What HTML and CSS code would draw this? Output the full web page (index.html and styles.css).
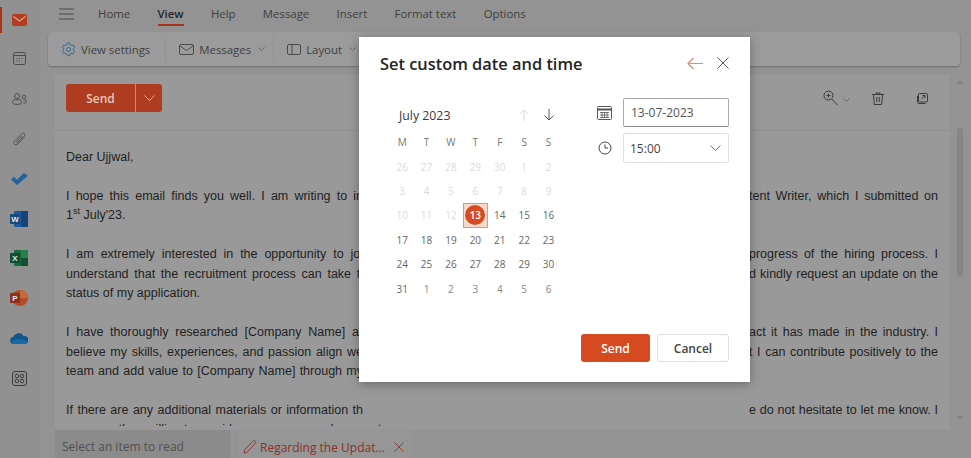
FILE: index.html
```html
<!DOCTYPE html>
<html lang="en">
<head>
    <meta charset="UTF-8">
    <meta name="viewport" content="width=device-width, initial-scale=1.0">
    <title>Set custom date and time</title>
    <link rel="stylesheet" href="styles.css">
</head>
<body>
    <div class="app">
        <div class="rail">
            <div class="rail-item active">
                <svg width="15" height="12" viewBox="0 0 15 12"><rect width="15" height="12" rx="2" fill="#b43c20"/><path d="M1.500 2.500L7.500 7l6-4.500" fill="none" stroke="#e0a594" stroke-width="1.100"/></svg>
            </div>
            <div class="rail-item">
                <svg width="13" height="13" viewBox="0 0 13 13" fill="none" stroke="#4a4a4a"><rect x=".5" y=".5" width="12" height="12" rx="2"/><path d="M.5 3.500h12"/><path d="M3.500 6.500h1M6 6.500h1M8.500 6.500h1M3.500 9h1M6 9h1" stroke-width="1.200"/></svg>
            </div>
            <div class="rail-item">
                <svg width="15" height="12" viewBox="0 0 15 12" fill="none" stroke="#4a4a4a" stroke-width=".9"><circle cx="5" cy="3" r="2.500"/><path d="M.5 9.500c0-2 .8-2.800 2.300-2.800h4.400c1.500 0 2.300.8 2.300 2.800 0 2.600-9 2.600-9 0z"/><circle cx="12" cy="4" r="1.800"/><path d="M11.500 7.200h1.500c1 0 1.500.6 1.500 1.800 0 .8-1.500 1.200-3 1"/></svg>
            </div>
            <div class="rail-item">
                <svg width="13" height="14" viewBox="0 0 13 14" fill="none" stroke="#555"><path d="M11.500 5L5 11.800c-1.300 1.300-2.800 1.400-3.600.6-.8-.8-.7-2.300.6-3.600L8.500 2c1-1 2.200-1.200 2.900-.6.700.6.600 1.900-.3 2.900L5.300 10.300c-.5.500-1 .6-1.400.2-.4-.4-.3-.9.200-1.400L9 4"/></svg>
            </div>
            <div class="rail-item">
                <svg width="17" height="12" viewBox="0 0 17 12"><path d="M0 6.500l2.800-2.800 3.200 3L12.800 0 17 2.800 6 12z" fill="#23629c"/></svg>
            </div>
            <div class="rail-item">
                <svg width="18" height="16" viewBox="0 0 18 16"><rect x="4" width="14" height="16" rx="1" fill="#1f5a9c"/><rect x="11" width="7" height="16" fill="#174478"/><rect y="3" width="10" height="10" rx="1" fill="#17487e"/><text x="5" y="11" class="app-letter">W</text></svg>
            </div>
            <div class="rail-item">
                <svg width="18" height="16" viewBox="0 0 18 16"><rect x="4" width="14" height="16" rx="1" fill="#1a6a40"/><rect x="11" width="7" height="8" fill="#2a8050"/><rect x="11" y="8" width="7" height="8" fill="#134f30"/><rect y="3" width="10" height="10" rx="1" fill="#124f2e"/><text x="5" y="11" class="app-letter">X</text></svg>
            </div>
            <div class="rail-item">
                <svg width="18" height="16" viewBox="0 0 18 16"><circle cx="10" cy="8" r="8" fill="#b34a28"/><path d="M10 0a8 8 0 0 1 8 8h-8z" fill="#c46a3c"/><rect y="3" width="10" height="10" rx="1" fill="#8e3018"/><text x="5" y="11" class="app-letter">P</text></svg>
            </div>
            <div class="rail-item">
                <svg width="18" height="12" viewBox="0 0 18 12"><path d="M4 12a3.500 3.500 0 0 1-.6-7A5.500 5.500 0 0 1 13.500 4 4 4 0 0 1 15 12z" fill="#12548c"/><path d="M4 12a3.500 3.500 0 0 1-3-2c2-3 8-4 16-1a3 3 0 0 1-2 3z" fill="#1a6aa8"/></svg>
            </div>
            <div class="rail-item">
                <svg width="15" height="15" viewBox="0 0 15 15" fill="none" stroke="#3c3c3c"><rect x=".5" y=".5" width="14" height="14" rx="2.500"/><circle cx="5" cy="5" r="1.800"/><circle cx="10" cy="5" r="1.800"/><circle cx="5" cy="10" r="1.800"/><circle cx="10" cy="10" r="1.800"/></svg>
            </div>
        </div>

        <div class="main">
            <div class="tabs">
                <svg class="burger" width="15" height="12" viewBox="0 0 15 12" stroke="#4a4a4a"><path d="M0 1h15M0 6h15M0 11h15"/></svg>
                <a>Home</a>
                <a class="current">View</a>
                <a>Help</a>
                <a>Message</a>
                <a>Insert</a>
                <a>Format text</a>
                <a>Options</a>
            </div>

            <div class="toolbar">
                <div class="tool">
                    <svg width="15" height="15" viewBox="0 0 15 15" fill="none" stroke="#2f6c9e"><path d="M6.200 1h2.600l.4 1.700 1.500.8 1.700-.5 1.200 2.200-1.200 1.300v1.600l1.200 1.300-1.200 2.200-1.700-.5-1.500.8-.4 1.700H6.200l-.4-1.700-1.500-.8-1.700.5-1.200-2.200 1.200-1.300V6.500L1.400 5.200l1.200-2.200 1.700.5 1.500-.8z"/><circle cx="7.500" cy="7.500" r="2"/></svg>
                    View settings
                </div>
                <div class="tool has-menu">
                    <svg width="15" height="11" viewBox="0 0 15 11" fill="none" stroke="#4a4a4a"><rect x=".5" y=".5" width="14" height="10" rx="1.500"/><path d="M1 2l6.500 4.500L14 2"/></svg>
                    Messages
                    <svg class="chev" width="7" height="4" viewBox="0 0 7 4"><path d="M.5.500l3 3 3-3"/></svg>
                </div>
                <div class="tool has-menu">
                    <svg width="14" height="11" viewBox="0 0 14 11" fill="none" stroke="#4a4a4a"><rect x=".5" y=".5" width="13" height="10" rx="1.500"/><path d="M5 .5v10"/></svg>
                    Layout
                    <svg class="chev" width="7" height="4" viewBox="0 0 7 4"><path d="M.5.500l3 3 3-3"/></svg>
                </div>
            </div>

            <div class="compose-wrap">
                <div class="compose">
                    <div class="compose-head">
                        <div class="send-split">
                            <span class="send-label">Send</span>
                            <span class="send-more">
                                <svg width="11" height="6" viewBox="0 0 11 6" fill="none" stroke="#e2b8aa"><path d="M.5.500l5 5 5-5"/></svg>
                            </span>
                        </div>
                        <div class="head-icons">
                            <span class="zoom-btn">
                                <svg width="15" height="16" viewBox="0 0 15 16" fill="none" stroke="#3c3c3c"><circle cx="5.500" cy="5.500" r="4.500"/><path d="M3.500 5.500h4M5.500 3.500v4M8.800 9l5.500 6"/></svg>
                                <svg class="chev" width="7" height="4" viewBox="0 0 7 4"><path d="M.5.500l3 3 3-3"/></svg>
                            </span>
                            <svg width="12" height="13" viewBox="0 0 12 13" fill="none" stroke="#3c3c3c"><path d="M0 2.500h12M4 2.500V1h4v1.500M1.500 2.500l.8 10h7.400l.8-10M4.800 5v5M7.200 5v5"/></svg>
                            <svg class="popout" width="11" height="11" viewBox="0 0 11 11" fill="none" stroke="#3c3c3c"><rect x="1.500" y=".5" width="9" height="8.500" rx="1"/><path d="M.5 3v6.500a1 1 0 0 0 1 1h7M4.500 6L8 2.500M5.500 2.500H8V5"/></svg>
                        </div>
                    </div>
                    <div class="letter">
                        <p><span class="line plain">Dear Ujjwal,</span></p>
                        <p>
                            <span class="line"><span>I hope this email finds you well. I am writing to in</span><span>tent Writer, which I submitted on</span></span>
                            <span class="line plain">1<sup>st</sup> July'23.</span>
                        </p>
                        <p>
                            <span class="line"><span>I am extremely interested in the opportunity to joi</span><span>progress of the hiring process. I</span></span>
                            <span class="line"><span>understand that the recruitment process can take ti</span><span>d kindly request an update on the</span></span>
                            <span class="line plain">status of my application.</span>
                        </p>
                        <p>
                            <span class="line"><span>I have thoroughly researched [Company Name] ar</span><span>act it has made in the industry. I</span></span>
                            <span class="line"><span>believe my skills, experiences, and passion align we</span><span>t I can contribute positively to the</span></span>
                            <span class="line"><span>team and add value to [Company Name] through my</span><span></span></span>
                        </p>
                        <p>
                            <span class="line"><span>If there are any additional materials or information th</span><span>e do not hesitate to let me know. I</span></span>
                            <span class="line plain">am more than willing to provide any necessary documents</span>
                        </p>
                    </div>
                </div>
                <div class="scrollbar">
                    <span class="arrow-up"></span>
                    <span class="thumb"></span>
                    <span class="arrow-down"></span>
                </div>
            </div>

            <div class="bottom-tabs">
                <div class="read-tab">Select an item to read</div>
                <div class="draft-tab">
                    <svg width="14" height="14" viewBox="0 0 14 14" fill="none" stroke="#8f3a34"><path d="M1 13l.8-3.500L10 1.200c.7-.7 1.700-.7 2.300 0 .6.600.6 1.600 0 2.200L4.300 12z"/></svg>
                    <span>Regarding the Updat...</span>
                    <svg width="10" height="10" viewBox="0 0 10 10" stroke="#8f3a34"><path d="M.5.500l9 9M9.500.500l-9 9"/></svg>
                </div>
            </div>
        </div>
    </div>

    <div class="dialog">
        <div class="dialog-head">
            <h2>Set custom date and time</h2>
            <svg width="16" height="13" viewBox="0 0 16 13" fill="none" stroke="#e08a72" stroke-width="1.200"><path d="M16 6.500H1M6.500 1L1 6.500 6.500 12"/></svg>
            <svg class="close" width="12" height="12" viewBox="0 0 12 12" stroke="#555"><path d="M.5.500l11 11M11.500.500l-11 11"/></svg>
        </div>
        <div class="dialog-body">
            <div class="calendar">
                <div class="cal-head">
                    <span class="month">July 2023</span>
                    <svg width="10" height="12" viewBox="0 0 10 12" fill="none" stroke="#dcdcdc"><path d="M5 12V1M.5 5.500L5 1l4.500 4.500"/></svg>
                    <svg width="10" height="12" viewBox="0 0 10 12" fill="none" stroke="#555"><path d="M5 0v11M.5 6.500L5 11l4.500-4.500"/></svg>
                </div>
                <div class="cal-grid" id="cal-grid"></div>
            </div>
            <div class="when">
                <div class="when-row">
                    <svg width="15" height="14" viewBox="0 0 15 14" fill="none" stroke="#555"><rect x=".5" y=".5" width="14" height="13" rx="1"/><path d="M.5 3.500h14" stroke-width="2"/><path d="M3 6.500h9M3 9h9M3 11.500h9M5 6v6M7.500 6v6M10 6v6" stroke-width=".8"/></svg>
                    <div class="date-field">13-07-2023</div>
                </div>
                <div class="when-row">
                    <svg width="14" height="14" viewBox="0 0 14 14" fill="none" stroke="#444"><circle cx="7" cy="7" r="6"/><path d="M7 3.500V7h3"/></svg>
                    <div class="time-field">
                        15:00
                        <svg width="11" height="6" viewBox="0 0 11 6" fill="none" stroke="#777"><path d="M.5.500l5 5 5-5"/></svg>
                    </div>
                </div>
            </div>
        </div>
        <div class="dialog-foot">
            <button class="btn-send">Send</button>
            <button class="btn-cancel">Cancel</button>
        </div>
    </div>

    <script>
        const days = ["M", "T", "W", "T", "F", "S", "S"];
        const dates = [26, 27, 28, 29, 30, 1, 2, 3, 4, 5, 6, 7, 8, 9, 10, 11, 12, 13, 14, 15, 16, 17, 18, 19, 20, 21, 22, 23, 24, 25, 26, 27, 28, 29, 30, 31, 1, 2, 3, 4, 5, 6];
        const grid = document.getElementById("cal-grid");

        days.forEach(d => {
            const cell = document.createElement("span");
            cell.className = "cal-cell dow";
            cell.textContent = d;
            grid.appendChild(cell);
        });

        dates.forEach((d, i) => {
            const cell = document.createElement("span");
            cell.className = "cal-cell";
            if (i < 17) cell.classList.add("past");
            if (i > 35) cell.classList.add("next");
            if (i === 17) {
                cell.classList.add("today");
                cell.innerHTML = `<b>${d}</b>`;
            } else {
                cell.textContent = d;
            }
            grid.appendChild(cell);
        });
    </script>
</body>
</html>
```

FILE: styles.css
```css
body {
    margin: 0;
    background-color: #939393;
    font-family: "Open Sans", sans-serif;
    color: #3a3a3a;
    overflow: hidden;
}
.app {
    display: flex;
    height: 458px;
}
.rail {
    width: 41px;
    flex-shrink: 0;
    box-sizing: border-box;
    padding-right: 3px;
    background-color: #919191;
}
.rail-item {
    height: 39.9px;
    display: flex;
    align-items: center;
    justify-content: center;
    position: relative;
}
.rail-item:first-child {
    height: 39px;
}
.rail-item.active::before {
    content: "";
    position: absolute;
    left: 0;
    top: 7px;
    width: 2px;
    height: 26px;
    background-color: #a8341c;
}
.app-letter {
    font-family: "Liberation Sans", sans-serif;
    font-size: 8px;
    font-weight: bold;
    fill: #e6e6e6;
    text-anchor: middle;
}
.main {
    flex: 1;
    min-width: 0;
    display: flex;
    flex-direction: column;
}
.tabs {
    height: 32px;
    display: flex;
    align-items: flex-start;
    gap: 27.3px;
    padding-left: 18px;
    font-size: 11.4px;
}
.tabs a {
    padding-top: 5px;
    height: 19px;
    line-height: 18px;
    color: #3f3f3f;
}
.tabs a.current {
    color: #262626;
    font-weight: 600;
    border-bottom: 2px solid #a8341c;
}
.burger {
    margin: 8px -3.3px 0 0;
}
.toolbar {
    height: 34px;
    margin: 0 11px 0 7px;
    border-radius: 4px;
    background-color: #9b9b9b;
    box-shadow: 0 1px 2px rgba(0, 0, 0, 0.25);
    display: flex;
    align-items: center;
    font-size: 11.4px;
    color: #3f3f3f;
}
.tool {
    display: flex;
    align-items: center;
    gap: 5px;
    padding: 0 15px 0 13px;
    height: 26px;
    border-right: 1px solid #939393;
}
.tool.has-menu {
    padding-right: 8px;
}
.tool:last-child {
    border-right: none;
}
.tool .chev {
    margin-left: 2px;
}
.chev {
    fill: none;
    stroke: #666;
    margin-left: 5px;
}
.compose-wrap {
    flex: 1;
    min-height: 0;
    display: flex;
    margin: 9px 0 0 14px;
}
.compose {
    flex: 1;
    min-width: 0;
    background-color: #999;
    display: flex;
    flex-direction: column;
    padding-bottom: 4px;
}
.compose-head {
    height: 56px;
    flex-shrink: 0;
    display: flex;
    align-items: flex-start;
    justify-content: space-between;
    padding: 9px 22px 0 11px;
    box-sizing: border-box;
    border-bottom: 1px solid #909090;
}
.send-split {
    display: flex;
    height: 28px;
    width: 96px;
    border-radius: 3px;
    overflow: hidden;
    background-color: #ad3c20;
    color: #e6c8bc;
    font-size: 12px;
    font-weight: 600;
}
.send-label {
    flex: 1;
    text-align: center;
    line-height: 29px;
    border-right: 1px solid #c98a78;
}
.send-more {
    width: 26px;
    display: flex;
    align-items: center;
    justify-content: center;
}
.head-icons {
    display: flex;
    align-items: center;
    gap: 22px;
    height: 28px;
}
.zoom-btn {
    display: flex;
    align-items: center;
}
.zoom-btn .chev {
    margin-top: 3px;
}
.popout {
    margin-left: 11px;
}
.letter {
    flex: 1;
    min-height: 0;
    overflow: hidden;
    padding: 17px 12px 0 11px;
    font-family: "Liberation Sans", sans-serif;
    font-size: 12.5px;
    line-height: 19.46px;
    color: #1f1f1f;
}
.letter p {
    margin: 0 0 19.46px;
}
.line {
    display: grid;
    grid-template-columns: 297px 1fr 189px;
    height: 19.46px;
}
.line span:first-child {
    grid-column: 1;
    text-align-last: justify;
}
.line span:last-child {
    grid-column: 3;
    text-align-last: justify;
}
.line.plain {
    display: block;
}
.letter sup {
    font-size: 9px;
    line-height: 0;
}
.scrollbar {
    width: 21px;
    position: relative;
    background-color: #939393;
}
.thumb {
    position: absolute;
    left: 7px;
    top: 53px;
    width: 6px;
    height: 149px;
    border-radius: 3px;
    background-color: #858585;
}
.arrow-up, .arrow-down {
    position: absolute;
    left: 6px;
    width: 0;
    height: 0;
    border-left: 4px solid transparent;
    border-right: 4px solid transparent;
}
.arrow-up {
    top: 5px;
    border-bottom: 4px solid #848484;
}
.arrow-down {
    bottom: 10px;
    border-top: 4px solid #848484;
}
.bottom-tabs {
    height: 28px;
    display: flex;
    gap: 9px;
    margin-left: 14px;
    font-size: 12px;
}
.read-tab {
    width: 175px;
    box-sizing: border-box;
    padding-left: 7px;
    line-height: 34px;
    background-color: #8b8b8b;
    color: #505050;
}
.draft-tab {
    display: flex;
    align-items: center;
    gap: 3px;
    padding: 6px 8px 0 4px;
    color: #8f2f2a;
    background-color: #969696;
}
.draft-tab svg:last-child {
    margin-left: 6px;
}

.dialog {
    position: absolute;
    left: 359px;
    top: 37px;
    width: 391px;
    height: 345px;
    box-sizing: border-box;
    background: white;
    box-shadow: 0 2px 10px rgba(0, 0, 0, 0.3);
    display: flex;
    flex-direction: column;
    padding: 0 21px 20px;
}
.dialog-head {
    height: 52px;
    display: flex;
    align-items: center;
}
.dialog-head h2 {
    flex: 1;
    margin: 0;
    font-size: 16.4px;
    font-weight: 600;
    color: #242424;
}
.close {
    margin-left: 14px;
}
.dialog-body {
    flex: 1;
    display: flex;
    padding-top: 9px;
}
.calendar {
    width: 171px;
    margin-left: 10px;
}
.cal-head {
    display: flex;
    align-items: center;
    gap: 15px;
    height: 32px;
    box-sizing: border-box;
    padding: 2px 0 0 9px;
}
.month {
    flex: 1;
    font-size: 12.3px;
    color: #3a3a3a;
}
.cal-head svg:last-child {
    margin-right: 7px;
}
.cal-grid {
    display: grid;
    grid-template-columns: repeat(7, 24.4px);
    grid-auto-rows: 24.4px;
    font-size: 10px;
    color: #666;
}
.cal-cell {
    display: flex;
    align-items: center;
    justify-content: center;
}
.cal-cell.dow {
    color: #777;
}
.cal-cell.past {
    color: #dadada;
}
.cal-cell.next {
    color: #888;
}
.cal-cell.today {
    background-color: #f8d9cc;
    box-shadow: inset 0 0 0 1px #a8a8a8;
}
.cal-cell.today b {
    width: 20px;
    height: 20px;
    border-radius: 50%;
    background-color: #d64a22;
    color: white;
    display: flex;
    align-items: center;
    justify-content: center;
    font-weight: 600;
}
.when {
    margin-left: 36px;
    flex: 1;
    display: flex;
    flex-direction: column;
    gap: 6px;
}
.when-row {
    display: flex;
    align-items: center;
    gap: 11px;
}
.when-row:last-child svg:first-child {
    margin-left: 1px;
}
.date-field, .time-field {
    flex: 1;
    box-sizing: border-box;
    font-size: 12px;
    color: #555;
    border-radius: 2px;
    display: flex;
    align-items: center;
}
.date-field {
    height: 29px;
    padding-left: 7px;
    border: 1px solid #aaa;
    border-bottom-color: #888;
}
.time-field {
    height: 30px;
    padding: 0 7px 0 6px;
    border: 1px solid #e0e0e0;
    color: #444;
    justify-content: space-between;
}
.dialog-foot {
    display: flex;
    justify-content: flex-end;
    gap: 7px;
}
.dialog-foot button {
    height: 28px;
    border-radius: 3px;
    font-family: "Open Sans", sans-serif;
    font-size: 12px;
    font-weight: 600;
}
.btn-send {
    width: 69px;
    background-color: #d64a22;
    color: white;
    border: none;
}
.btn-cancel {
    width: 72px;
    background: white;
    color: #444;
    border: 1px solid #e0e0e0;
}
```
